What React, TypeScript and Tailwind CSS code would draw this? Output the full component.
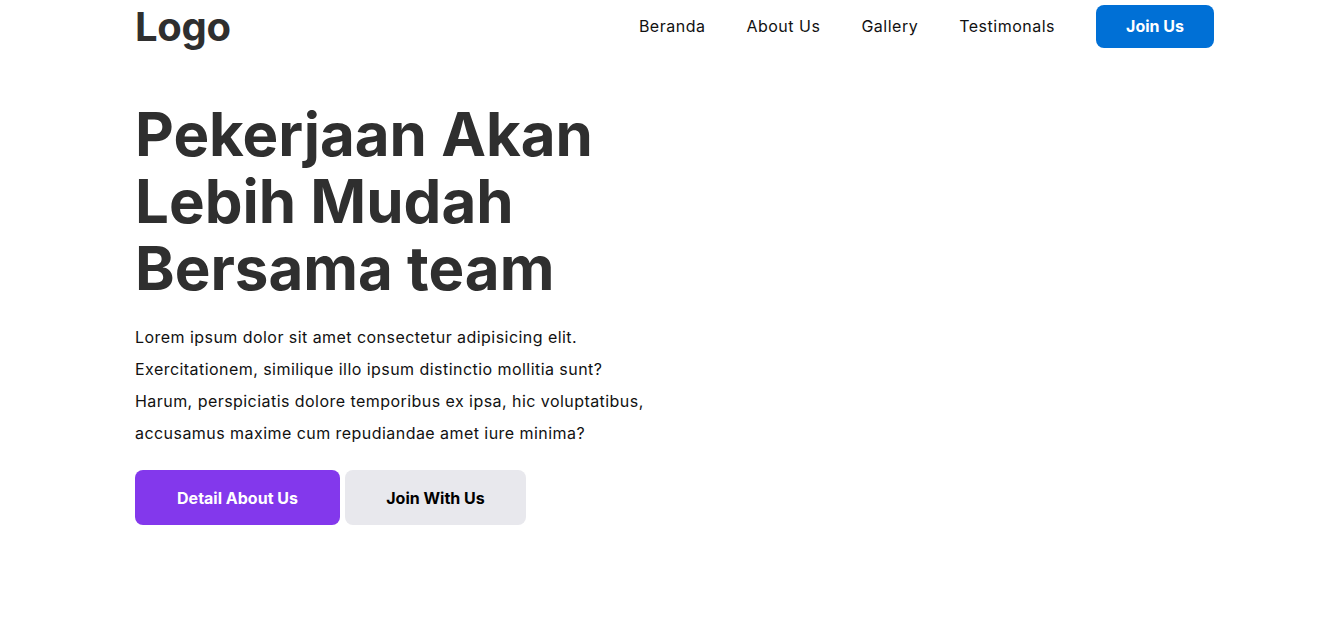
import React from "react";

export default function App() {
  const font = { fontFamily: "Inter, 'Open Sans', sans-serif" };
  return (
    <div className="min-h-[631px] bg-white" style={font}>
      <div className="ml-[135px] w-[1079px]">
        <nav className="flex h-[52px] items-center justify-between">
          <div className="text-[40px] font-bold leading-none tracking-[-0.3px] text-[#2f2f2f] mt-[2px]">Logo</div>
          <div className="flex items-center">
            <a className="text-[16px] tracking-[0.5px] text-[#111] mr-[41px]">Beranda</a>
            <a className="text-[16px] tracking-[0.5px] text-[#111] mr-[41px]">About Us</a>
            <a className="text-[16px] tracking-[0.5px] text-[#111] mr-[41px]">Gallery</a>
            <a className="text-[16px] tracking-[0.5px] text-[#111] mr-[41px]">Testimonals</a>
            <button className="flex h-[43px] w-[118px] items-center justify-center rounded-[8px] bg-[#0070d6] text-[16px] font-bold text-white">
              Join Us
            </button>
          </div>
        </nav>
        <section className="w-[600px] pt-[49px]">
          <h1 className="text-[60px] font-bold leading-[67px] text-[#2f2f2f]">
            Pekerjaan Akan<br />Lebih Mudah<br />Bersama team
          </h1>
          <p className="mt-[19px] whitespace-nowrap text-[16px] leading-[32px] tracking-[0.45px] text-[#111]">
            Lorem ipsum dolor sit amet consectetur adipisicing elit.<br />
            Exercitationem, similique illo ipsum distinctio mollitia sunt?<br />
            Harum, perspiciatis dolore temporibus ex ipsa, hic voluptatibus,<br />
            accusamus maxime cum repudiandae amet iure minima?
          </p>
          <div className="mt-[21px] flex gap-[5px]">
            <button className="h-[55px] w-[205px] rounded-[8px] bg-[#8338ec] text-[16px] font-bold text-white">
              Detail About Us
            </button>
            <button className="h-[55px] w-[181px] rounded-[8px] bg-[#e8e8ed] text-[16px] font-bold text-black">
              Join With Us
            </button>
          </div>
        </section>
      </div>
    </div>
  );
}
